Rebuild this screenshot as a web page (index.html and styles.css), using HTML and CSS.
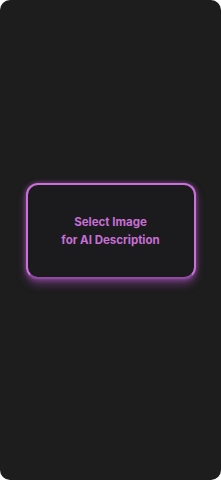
FILE: index.html
```html
<!DOCTYPE html>
<html lang="en">
<head>
    <meta charset="UTF-8">
    <meta name="viewport" content="width=device-width, initial-scale=1.0">
    <title>AI Description</title>
    <link rel="stylesheet" href="styles.css">
</head>
<body>
    <div class="screen">
        <button class="select-box" type="button">
            <span>Select Image</span>
            <span>for AI Description</span>
        </button>
    </div>
</body>
</html>
```

FILE: styles.css
```css
* {
    margin: 0;
    padding: 0;
    box-sizing: border-box;
    font-family: 'Inter', 'Liberation Sans', sans-serif;
}

html, body {
    background: #fff;
    height: 100%;
}

.screen {
    height: 100vh;
    background: #1d1d1d;
    border-radius: 10px;
    display: flex;
    align-items: center;
    justify-content: center;
}

.select-box {
    width: 170px;
    height: 96px;
    margin-bottom: 18px;
    background: #1b1a1c;
    border: 2px solid #c871d8;
    border-bottom-color: #8e4aa0;
    border-radius: 12px;
    box-shadow: 0 0 5px rgba(210, 110, 230, 0.5), 0 5px 9px rgba(150, 70, 170, 0.55);
    color: #c76fd6;
    font-size: 11.5px;
    font-weight: 700;
    line-height: 18px;
    display: flex;
    flex-direction: column;
    align-items: center;
    justify-content: center;
    cursor: pointer;
}
```
